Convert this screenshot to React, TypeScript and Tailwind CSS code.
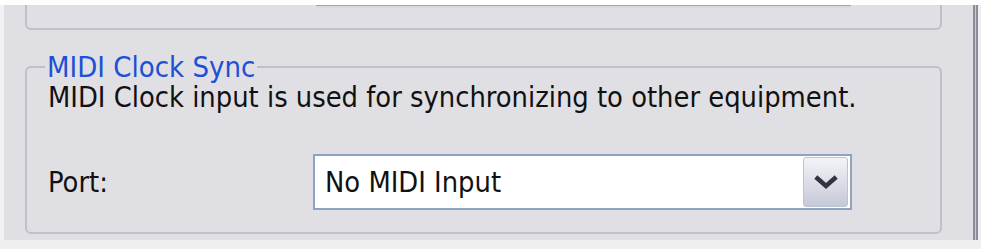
import { useState } from 'react';

// Chevron glyph for the combo button
const ComboArrow = () => (
  <svg width="24" height="15" viewBox="0 0 24 15" fill="none">
    <path d="M3.5 3.5 L12 11 L20.5 3.5" stroke="#33333d" strokeWidth="4.5" strokeLinecap="square" strokeLinejoin="miter" />
  </svg>
);

export default function App() {
  const [port] = useState('No MIDI Input');

  return (
    <div className="w-[981px] h-[249px] flex flex-col overflow-hidden bg-[#efeff2] [font-family:'DejaVu_Sans_Condensed','DejaVu_Sans',sans-serif]">
      {/* top strip */}
      <div className="h-[5px] bg-white"></div>

      <div className="flex h-[235px]">
        {/* left edge */}
        <div className="w-[4px] bg-[#f2f2f5]"></div>

        {/* dialog page */}
        <div className="w-[969px] flex flex-col bg-[#e0dfe3]">
          {/* bottom of the upper group box */}
          <div className="ml-[21px] w-[917px] h-[25px] border-x-2 border-b-2 border-[#c1bfc7] rounded-b-[6px]">
            <div className="ml-[289px] w-[535px] h-[1px] bg-[#9ba6b7]"></div>
            <div className="ml-[289px] w-[535px] h-[2px] bg-[#d6dae3]"></div>
          </div>

          {/* MIDI Clock Sync group */}
          <fieldset className="mt-[22px] ml-[21px] w-[917px] h-[182px] border-2 border-[#c1bfc7] rounded-[6px] pl-[21px]">
            <legend className="-ml-[3px] px-[2px] text-[29px] leading-[30px] text-[#1d50d6]">MIDI Clock Sync</legend>
            <p className="text-[28.75px] leading-[30px] text-[#111]">
              MIDI Clock input is used for synchronizing to other equipment.
            </p>
            <div className="mt-[42px] flex items-center">
              <span className="w-[265px] text-[28.75px] leading-[30px] text-[#111]">Port:</span>
              <div className="w-[539px] h-[56px] flex items-stretch border-2 border-[#8ea3bf] bg-white">
                <span className="flex-1 pl-[10px] flex items-center text-[28.75px] leading-[30px] text-[#111]">{port}</span>
                <div className="w-[45px] my-[1px] mr-[2px] flex items-center justify-center rounded-[3px] border border-[#bcc3d3] bg-gradient-to-b from-[#f3f4f8] to-[#c6c9d7]">
                  <ComboArrow />
                </div>
              </div>
            </div>
          </fieldset>
        </div>

        {/* right frame lines */}
        <div className="w-[2px] bg-[#8e8c99]"></div>
        <div className="w-[1px] bg-[#cbcad2]"></div>
        <div className="w-[2px] bg-[#8e8c99]"></div>
        <div className="flex-1 bg-[#eeeef1]"></div>
      </div>

      {/* bottom strip */}
      <div className="flex-1 bg-[#efeff2]"></div>
    </div>
  );
}
